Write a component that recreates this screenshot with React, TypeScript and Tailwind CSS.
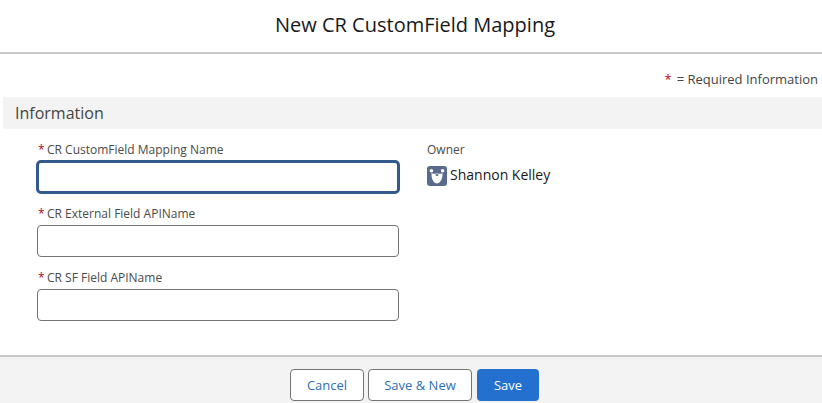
const font = { fontFamily: '"Open Sans", sans-serif' };

function Field({ label, focused }: { label: string; focused?: boolean }) {
  return (
    <div className="flex flex-col">
      <label className="h-[23px] flex items-center text-[12px] text-[#4a4a4a]">
        <span className="text-[#ba0517] w-[10px] pl-[1px]">*</span>
        {label}
      </label>
      <input
        type="text"
        className={
          focused
            ? 'w-[364px] h-[34px] -mt-[1px] -mb-[1px] -ml-[1px] rounded-[5px] bg-white border-[3px] border-[#34598c] outline-none'
            : 'w-[362px] h-[32px] rounded-[4px] bg-white border border-[#747474] outline-none'
        }
      />
    </div>
  );
}

function BearIcon() {
  return (
    <svg width="20" height="20" viewBox="0 0 20 20" className="shrink-0">
      <rect width="20" height="20" rx="3" fill="#5a6a8c" />
      <circle cx="4.4" cy="4.8" r="1.8" fill="#ffffff" />
      <circle cx="15.6" cy="4.8" r="1.8" fill="#ffffff" />
      <path d="M4.6 7 C4.2 11.5 5.6 16.6 10 17.6 C14.4 16.6 15.8 11.5 15.4 7 C14.4 8.4 12.6 7.4 10 7.4 C7.4 7.4 5.6 8.4 4.6 7 Z" fill="#ffffff" />
      <ellipse cx="10" cy="9" rx="1.5" ry="1" fill="#5a6a8c" />
    </svg>
  );
}

export default function App() {
  return (
    <div style={font} className="w-[822px] h-[403px] bg-white flex flex-col overflow-hidden">
      <header className="h-[54px] shrink-0 border-b-2 border-[#c9c9c9] flex items-center justify-center pb-[3px] pl-[8px]">
        <h1 className="text-[20px] leading-[28px] text-[#181818]">New CR CustomField Mapping</h1>
      </header>

      <main className="flex-1 flex flex-col">
        <div className="h-[43px] flex items-end justify-end pr-[4px] pb-[8px] text-[13px] leading-[20px] text-[#444444]">
          <span className="text-[#ba0517] mr-[5px]">*</span>= Required Information
        </div>
        <div className="h-[32px] ml-[3px] pl-[12px] bg-[#f3f3f3] flex items-center text-[16px] text-[#444444]">
          Information
        </div>
        <div className="flex pl-[37px] pt-[9px]">
          <div className="w-[390px] flex flex-col gap-[9px]">
            <Field label="CR CustomField Mapping Name" focused />
            <Field label="CR External Field APIName" />
            <Field label="CR SF Field APIName" />
          </div>
          <div className="flex flex-col">
            <div className="h-[23px] flex items-center text-[12px] text-[#4a4a4a]">Owner</div>
            <div className="mt-[4px] flex items-center gap-[3px] text-[14px] leading-[20px] text-[#181818]">
              <BearIcon />
              <span className="mb-[2px]">Shannon Kelley</span>
            </div>
          </div>
        </div>
      </main>

      <footer className="h-[48px] shrink-0 border-t-2 border-[#c9c9c9] bg-[#f3f3f3] flex justify-center pt-[12px] pl-[7px] gap-[4px] text-[13px]">
        <button className="w-[74px] h-[32px] pt-[1px] rounded-[4px] border border-[#747474] bg-white text-[#2e6fb3]">Cancel</button>
        <button className="w-[104px] h-[32px] pt-[1px] rounded-[4px] border border-[#747474] bg-white text-[#2e6fb3]">Save &amp; New</button>
        <button className="w-[62px] h-[32px] pt-[1px] ml-[1px] rounded-[4px] bg-[#2470cf] text-white">Save</button>
      </footer>
    </div>
  );
}
